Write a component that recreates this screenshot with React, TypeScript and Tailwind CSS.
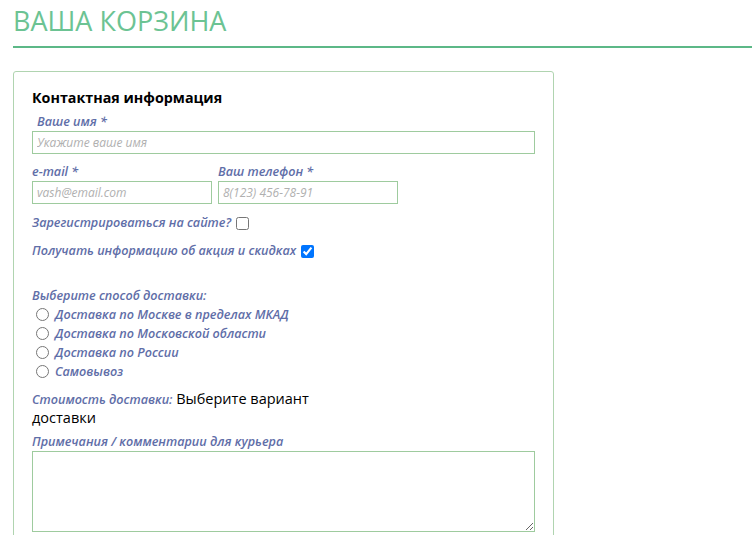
import React from "react";

const label = "italic font-semibold text-[12.6px] leading-[18px] text-[#5f6ea8]";
const field =
  "block h-[23px] border border-[#9ecb9e] bg-white px-[4px] text-[12px] italic outline-none placeholder:text-[#b0b0b0]";

const deliveryOptions = [
  "Доставка по Москве в пределах МКАД",
  "Доставка по Московской области",
  "Доставка по России",
  "Самовывоз",
];

export default function App() {
  return (
    <div className="min-h-[535px] bg-white pl-[13px] font-['Open_Sans',sans-serif]">
      {/* Page title */}
      <h1 className="pt-[4px] text-[27px] leading-[34px] font-normal text-[#6cc393]">ВАША КОРЗИНА</h1>
      <div className="mt-[8px] h-[2px] bg-[#5cb887]" />

      {/* Contact card */}
      <div className="mt-[23px] w-[541px] rounded-[3px] border border-[#b0d4b0] px-[18px] pt-[16px] pb-[20px]">
        <h2 className="text-[14.3px] leading-[20px] font-bold text-black">Контактная информация</h2>

        <div className={`${label} mt-[5px] pl-[5px]`}>Ваше имя *</div>
        <input className={`${field} w-[503px]`} placeholder="Укажите ваше имя" />

        <div className="mt-[9px] flex gap-[6px]">
          <div>
            <div className={label}>e-mail *</div>
            <input className={`${field} w-[180px]`} placeholder="vash@email.com" />
          </div>
          <div>
            <div className={label}>Ваш телефон *</div>
            <input className={`${field} w-[180px]`} placeholder="8(123) 456-78-91" />
          </div>
        </div>

        <label className={`${label} mt-[10px] flex items-center gap-[5px]`}>
          Зарегистрироваться на сайте?
          <input type="checkbox" className="h-[13px] w-[13px]" />
        </label>
        <label className={`${label} mt-[10px] flex items-center gap-[5px]`}>
          Получать информацию об акция и скидках
          <input type="checkbox" defaultChecked className="h-[13px] w-[13px] accent-[#0075ff]" />
        </label>

        <div className={`${label} mt-[27px]`}>Выберите способ доставки:</div>
        <div className="flex flex-col">
          {deliveryOptions.map((opt) => (
            <label key={opt} className={`${label} flex h-[19px] items-center gap-[6px] pl-[4px]`}>
              <input type="radio" name="delivery" className="m-0 h-[13px] w-[13px]" />
              {opt}
            </label>
          ))}
        </div>

        <div className="mt-[9px] w-[290px] text-[14.5px] leading-[17px] text-black">
          <span className={`${label} leading-[17px]`}>Стоимость доставки:</span> Выберите вариант доставки
        </div>

        <div className={`${label} mt-[7px]`}>Примечания / комментарии для курьера</div>
        <textarea className="block h-[81px] w-[503px] border border-[#9ecb9e] bg-white outline-none" />
      </div>
    </div>
  );
}
